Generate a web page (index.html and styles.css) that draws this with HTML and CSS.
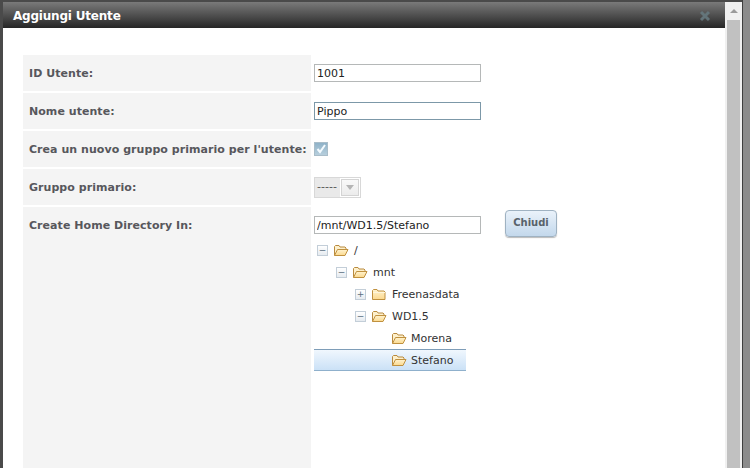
FILE: index.html
```html
<!DOCTYPE html>
<html lang="it">
<head>
<meta charset="utf-8">
<title>Aggiungi Utente</title>
<link rel="stylesheet" href="styles.css">
</head>
<body>
<svg class="defs" width="0" height="0" aria-hidden="true">
  <defs>
    <linearGradient id="fo" x1="0" y1="0" x2="0" y2="1"><stop offset="0" stop-color="#fff3cf"/><stop offset="1" stop-color="#fbd98f"/></linearGradient>
    <symbol id="open" viewBox="0 0 16 13">
      <path d="M1.5 11.5V2.5l1-1h3.5l1 1.5h5l1 1v1.5" fill="#fdf0cc" stroke="#b98a3e"/>
      <path d="M1.5 11.5l3-6h10.500l-3 6z" fill="url(#fo)" stroke="#c0913f"/>
    </symbol>
    <symbol id="closed" viewBox="0 0 16 13">
      <path d="M1.500 11.500V2.500l1-1h3.500l1 1.500h6l1 1v7.500z" fill="url(#fo)" stroke="#c0913f"/>
      <path d="M2 4.500h12" stroke="#fff6dc"/>
    </symbol>
  </defs>
</svg>
<div class="window">
  <div class="modal">
    <header class="titlebar">
      <h1 class="title">Aggiungi Utente</h1>
      <svg class="close" viewBox="0 0 12 12" width="12" height="12" aria-label="Chiudi"><path d="M2 2l8 8M10 2l-8 8" stroke="#66797f" stroke-width="3"/></svg>
    </header>
    <form class="form">
      <div class="row">
        <label class="label">ID Utente:</label>
        <div class="field"><input class="text" type="text" value="1001"></div>
      </div>
      <div class="row">
        <label class="label">Nome utente:</label>
        <div class="field"><input class="text focused" type="text" value="Pippo"></div>
      </div>
      <div class="row">
        <label class="label">Crea un nuovo gruppo primario per l'utente:</label>
        <div class="field">
          <span class="check"><svg viewBox="0 0 10 10" width="10" height="10"><path d="M1.500 5l2.500 3 5-7" fill="none" stroke="#f4fbff" stroke-width="2"/></svg></span>
        </div>
      </div>
      <div class="row">
        <label class="label">Gruppo primario:</label>
        <div class="field">
          <div class="select"><span class="select-value">-----</span><span class="select-arrow"><i class="tri"></i></span></div>
        </div>
      </div>
      <div class="row home">
        <label class="label">Create Home Directory In:</label>
        <div class="field top">
          <div class="picker">
            <input class="text" type="text" value="/mnt/WD1.5/Stefano">
            <ul class="tree">
              <li class="node d0"><span class="exp">&minus;</span><svg class="folder"><use href="#open"/></svg><span>/</span></li>
              <li class="node d1"><span class="exp">&minus;</span><svg class="folder"><use href="#open"/></svg><span>mnt</span></li>
              <li class="node d2"><span class="exp">+</span><svg class="folder"><use href="#closed"/></svg><span>Freenasdata</span></li>
              <li class="node d2"><span class="exp">&minus;</span><svg class="folder"><use href="#open"/></svg><span>WD1.5</span></li>
              <li class="node d3"><svg class="folder"><use href="#open"/></svg><span>Morena</span></li>
              <li class="node d3 selected"><svg class="folder"><use href="#open"/></svg><span>Stefano</span></li>
            </ul>
          </div>
          <button class="btn" type="button">Chiudi</button>
        </div>
      </div>
    </form>
  </div>
  <div class="scrollbar">
    <div class="scroll-up"><i class="up"></i></div>
    <div class="thumb"></div>
  </div>
</div>
</body>
</html>
```
FILE: styles.css
```css
html, body { margin: 0; height: 100%; overflow: hidden; }
body { background: #8b8b8b; font-family: "DejaVu Sans", Verdana, sans-serif; font-size: 11px; color: #222; }
.defs { position: absolute; }
.window { display: flex; height: 468px; width: 743px; box-sizing: border-box; padding: 2px 0 0 3px; background: #fff; box-shadow: inset 3px 2px 0 #4a4a4a; border-right: 1px solid #3e3e3e; }
.modal { width: 722px; display: flex; flex-direction: column; background: #fff; overflow: hidden; }
.titlebar { height: 26px; flex: none; display: flex; align-items: center; justify-content: space-between; padding: 1px 14px 0 10px; background: linear-gradient(#7a7a7a, #262626); box-sizing: border-box; }
.title { margin: 0; font-size: 12px; font-weight: bold; color: #fff; letter-spacing: -0.2px; }
.close { opacity: .9; }
.form { flex: 1; display: flex; flex-direction: column; gap: 2px; padding: 27px 0 0 20px; }
.row { display: flex; height: 36px; flex: none; }
.row.home { flex: 1; }
.label { width: 288px; flex: none; box-sizing: border-box; padding: 12px 0 0 6px; background: #f4f4f4; font-weight: bold; color: #57575c; line-height: 14px; letter-spacing: 0.05px; }
.field { display: flex; align-items: center; padding-left: 3px; }
.field.top { align-items: flex-start; }
.text { width: 167px; height: 18px; box-sizing: border-box; border: 1px solid #b5b8b8; padding: 0 2px; margin: 0; font: 11px "DejaVu Sans", sans-serif; color: #222; background: #fff; outline: 0; display: block; }
.text.focused { border-color: #7c98a8; }
.check { width: 14px; height: 14px; box-sizing: border-box; border: 1px solid #a9bdc9; background: linear-gradient(#8fb2c8, #b7cfdd); display: flex; align-items: center; justify-content: center; }
.select { display: flex; height: 21px; border: 1px solid #d8d8d8; box-sizing: border-box; width: 47px; background: #fff; }
.select-value { width: 25px; background: #e9e9e9; color: #555; line-height: 18px; padding-left: 2px; box-sizing: border-box; font-size: 11px; }
.select-arrow { margin: 1px; flex: 1; border: 1px solid #d4d4d4; background: linear-gradient(#f9f9f9, #ececec); display: flex; align-items: center; justify-content: center; }
.tri { width: 0; height: 0; border: 4px solid transparent; border-top: 5px solid #b5b5b5; border-bottom: 0; }
.picker { width: 167px; padding-top: 9px; }
.tree { list-style: none; margin: 5px 0 0; padding: 0; width: 152px; }
.node { display: flex; align-items: center; height: 22px; color: #333; font-size: 11px; }
.node.d0 { padding-left: 3px; }
.node.d1 { padding-left: 22px; }
.node.d2 { padding-left: 41px; }
.node.d3 { padding-left: 77px; }
.exp { width: 11px; height: 11px; box-sizing: border-box; border: 1px solid #c3ced8; background: linear-gradient(#fff, #e6ebf0); color: #5c6f80; font-size: 9px; line-height: 8px; text-align: center; margin-right: 5px; flex: none; }
.folder { width: 16px; height: 13px; margin-right: 4px; flex: none; }
.exp + .folder { margin-right: 5px; }
.node.selected { background: linear-gradient(#f2f8fe, #c9e0f6); box-shadow: inset 0 1px 0 #7e9db8, inset 0 -1px 0 #8fb0cc; }
.btn { margin: 3px 0 0 24px; width: 52px; height: 27px; padding: 0 0 3px; border: 1px solid #9fb2c2; border-radius: 4px; background: linear-gradient(#eaf2fa, #c3d8ec); font: bold 10px "DejaVu Sans", sans-serif; color: #58626b; box-shadow: 0 1px 1px #bbb; }
.scrollbar { width: 17px; flex: none; display: flex; flex-direction: column; align-items: center; background: #f0f0f0; box-sizing: border-box; }
.scroll-up { height: 18px; flex: none; width: 100%; display: flex; align-items: center; justify-content: center; }
.up { width: 0; height: 0; border: 4px solid transparent; border-bottom: 4px solid #9a9a9a; border-top: 0; }
.thumb { width: 13px; flex: 1; background: #c1c1c1; }
```
